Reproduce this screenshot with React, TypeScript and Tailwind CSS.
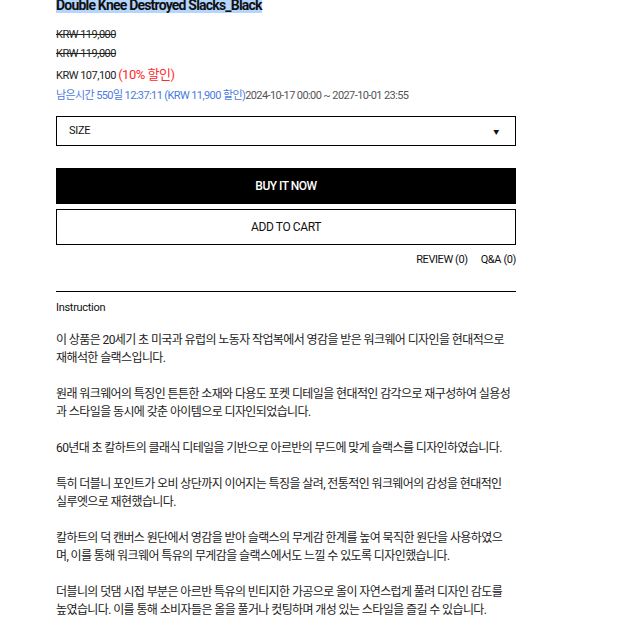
import React from 'react';

const paragraphs: string[][] = [
  ['이 상품은 20세기 초 미국과 유럽의 노동자 작업복에서 영감을 받은 워크웨어 디자인을 현대적으로', '재해석한 슬랙스입니다.'],
  ['원래 워크웨어의 특징인 튼튼한 소재와 다용도 포켓 디테일을 현대적인 감각으로 재구성하여 실용성', '과 스타일을 동시에 갖춘 아이템으로 디자인되었습니다.'],
  ['60년대 초 칼하트의 클래식 디테일을 기반으로 아르반의 무드에 맞게 슬랙스를 디자인하였습니다.'],
  ['특히 더블니 포인트가 오비 상단까지 이어지는 특징을 살려, 전통적인 워크웨어의 감성을 현대적인', '실루엣으로 재현했습니다.'],
  ['칼하트의 덕 캔버스 원단에서 영감을 받아 슬랙스의 무게감 한계를 높여 묵직한 원단을 사용하였으', '며, 이를 통해 워크웨어 특유의 무게감을 슬랙스에서도 느낄 수 있도록 디자인했습니다.'],
  ['더블니의 덧댐 시접 부분은 아르반 특유의 빈티지한 가공으로 올이 자연스럽게 풀려 디자인 감도를', '높였습니다. 이를 통해 소비자들은 올을 풀거나 컷팅하며 개성 있는 스타일을 즐길 수 있습니다.'],
];

export default function App() {
  return (
    <div className="w-[636px] h-[636px] overflow-hidden bg-white text-[#111] font-['Roboto','Noto_Sans_CJK_KR',sans-serif]">
      <div className="ml-[56px] w-[460px] -mt-[3px]">
        <h1 className="text-[14px] leading-[17px] font-bold tracking-[-0.8px]">
          <span className="bg-[#b4d5fe]">Double Knee Destroyed Slacks_Black</span>
        </h1>

        <div className="mt-[11px] text-[11px] tracking-[-0.5px] text-[#222]">
          <p className="h-[19px] leading-[19px] line-through">KRW 119,000</p>
          <p className="h-[20px] leading-[20px] line-through">KRW 119,000</p>
          <p className="h-[22px] leading-[22px]">
            KRW 107,100 <span className="text-[13px] text-[#ff2a2a]">(10% 할인)</span>
          </p>
          <p className="h-[20px] leading-[20px] text-[#555] tracking-[-0.6px]">
            <span className="text-[#4a7be0]">남은시간 550일 12:37:11 (KRW 11,900 할인)</span>2024-10-17 00:00 ~ 2027-10-01 23:55
          </p>
        </div>

        <div className="mt-[10px] h-[30px] border border-black flex items-center justify-between pl-[12px] pr-[16px] text-[11px] tracking-[-0.3px]">
          <span>SIZE</span>
          <span className="text-[6px]">▼</span>
        </div>

        <button className="mt-[22px] w-full h-[36px] bg-black text-white text-[12px] font-medium tracking-[-0.5px]">
          BUY IT NOW
        </button>
        <button className="mt-[5px] w-full h-[36px] border border-black bg-white text-[12px] tracking-[-0.4px]">
          ADD TO CART
        </button>

        <div className="mt-[8px] flex justify-end gap-[13px] text-[11px] tracking-[-0.4px] leading-[14px]">
          <span>REVIEW (0)</span>
          <span>Q&amp;A (0)</span>
        </div>

        <div className="mt-[24px] border-t border-black" />

        <p className="mt-[9px] text-[11px] leading-[14px] tracking-[-0.3px]">Instruction</p>

        <div className="mt-[16px] text-[12px] leading-[18px] tracking-[-0.6px] text-[#222]">
          {paragraphs.map((lines, i) => (
            <p key={i} className="mb-[18px] whitespace-nowrap">
              {lines.map((l, j) => (
                <React.Fragment key={j}>
                  {l}
                  {j < lines.length - 1 && <br />}
                </React.Fragment>
              ))}
            </p>
          ))}
        </div>
      </div>
    </div>
  );
}
